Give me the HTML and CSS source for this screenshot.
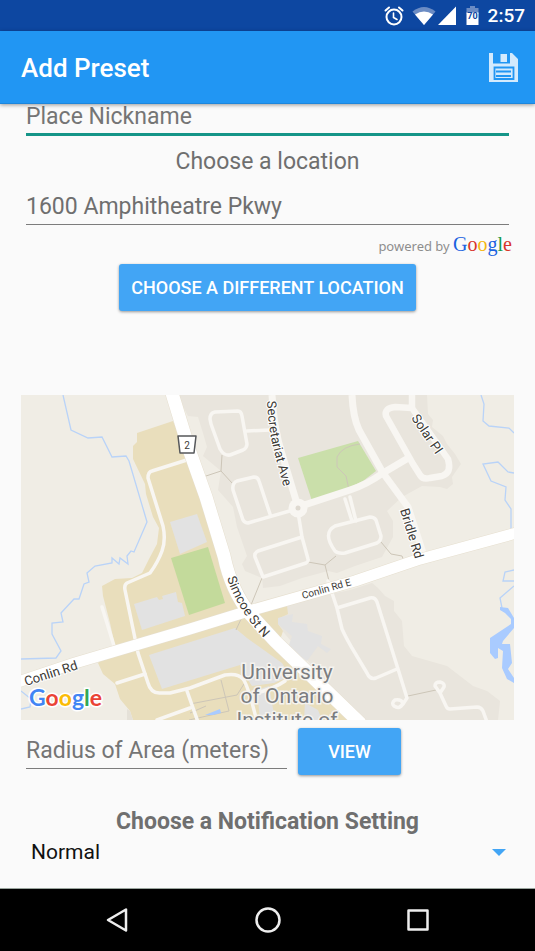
FILE: index.html
```html
<!DOCTYPE html>
<html lang="en">
<head>
<meta charset="utf-8">
<meta name="viewport" content="width=device-width, initial-scale=1">
<title>Add Preset</title>
<link rel="stylesheet" href="styles.css">
</head>
<body>
<div class="status-bar">
  <svg class="status-icon" width="20" height="20" viewBox="0 0 20 20" aria-hidden="true">
    <g fill="none" stroke="#fff" stroke-width="2" stroke-linecap="round">
      <circle cx="10" cy="11" r="7.5"/>
      <path d="M1.5 4.5 5 1.5M18.500 4.500 15 1.500"/>
      <path d="M9.500 7v4.500l3.500 2" stroke-width="1.600"/>
    </g>
  </svg>
  <svg class="status-icon wifi" width="24" height="20" viewBox="0 0 24 20" aria-hidden="true">
    <path d="M.500 5.500Q12-3.500 23.500 5.500L12 19z" fill="#6b8cc4"/>
    <path d="M3 8.500Q12 2.500 21 8.500L12 19z" fill="#fff"/>
  </svg>
  <svg class="status-icon signal" width="18" height="20" viewBox="0 0 18 20" aria-hidden="true">
    <path d="M18 .500V19H0z" fill="#fff"/>
  </svg>
  <svg class="status-icon battery" width="13" height="20" viewBox="0 0 13 20" aria-hidden="true">
    <path d="M4 0h5v2h3.500v6H.500V2H4z" fill="#6b8cc4"/>
    <path d="M.500 6.500h12V19H.500z" fill="#fff"/>
    <text x="6.500" y="13" text-anchor="middle" class="battery-level">70</text>
  </svg>
  <span class="clock">2:57</span>
</div>

<header class="app-bar">
  <h1 class="app-title">Add Preset</h1>
  <button class="save" type="button" aria-label="Save">
    <svg width="30" height="30" viewBox="0 0 30 30" aria-hidden="true">
      <path fill="#d3eafd" d="M0 0h4v10.500h17V0h2L29 6V29H0z"/>
      <path fill="#d3eafd" d="M11.500 1h6.500v8h-6.500z"/>
      <path fill="none" stroke="#2196f3" stroke-width="1.800" d="M5.500 14.500h19V26h-19zM7 18.500h15M7 23h15"/>
    </svg>
  </button>
</header>

<main class="form">
  <input class="field nickname" type="text" placeholder="Place Nickname" aria-label="Place Nickname">
  <label class="caption" for="address">Choose a location</label>
  <input class="field" id="address" type="text" value="1600 Amphitheatre Pkwy">
  <p class="attribution">powered by <span class="brand"><span class="g-blue">G</span><span class="g-red">o</span><span class="g-yellow">o</span><span class="g-blue">g</span><span class="g-green">l</span><span class="g-red">e</span></span></p>
  <button class="button choose" type="button">CHOOSE A DIFFERENT LOCATION</button>

  <svg class="map" viewBox="21 395 493 325" role="img" aria-label="Map">
    <defs>
      <path id="secretariat" d="M267 401Q268 425 273 447L287 500"/>
      <path id="simcoe" d="M227 578Q233 596 244 613T275 649"/>
    </defs>
    <path fill="#f0ede5" d="M21 395h493v325H21z"/>

    <!-- Residential blocks -->
    <g fill="#e9e5dd">
      <path d="M177 395 188 416 198 417 203 433 207 447 203 456 221 471 218 490 233 507 237 527 247 556 242 564 245 571 262 578 263 588 280 586 302 578 328 571 337 573 355 566 382 557 393 537 393 521 387 511 402 497 422 486 440 487 447 489 453 484 452 477 461 464 455 454 447 444 443 436 432 427 433 420 428 414 427 395z"/>
      <path d="M263 608 350 590 372 583 378 588 385 596 394 601 394 611 402 621 404 646 412 656 447 666 473 686 487 691 500 701 498 720H358z"/>
    </g>

    <!-- Campus grounds -->
    <g fill="#e9debc">
      <path d="M173 421 137 433 137 442 133 446 133 459 145 484 146 494 153 517 159 528 157 544 149 559 142 573 132 578 115 579 102 586 103 596 110 623 115 646 98 663 103 674 115 684 120 699 130 711 133 720H357L250 614 224 556 200 475 188 455z"/>
      <path d="M248 613 287 606 288 614 278 619 278 624 283 631 280 640 272 643z"/>
    </g>
    <path fill="#e5e1d8" d="M127 709 130 711 133 720H127z"/>

    <!-- Buildings -->
    <g fill="#e2e2e2">
      <path d="M170 522 197 514 207 542 180 554z"/>
      <path d="M134 604 157 597 159 600 163 599 162 596 176 592 178 602 182 603 185 616 142 630z"/>
      <path d="M149 655 235 628 247 638 282 663 290 676 274 683 252 686 246 677 240 665 162 689z"/>
      <path d="M278 618 285 616 293 614 292 622 300 623 307 624 308 631 322 636 321 644 331 649 327 653 318 646 307 661 288 648 292 636 278 624z"/>
      <path d="M257 690 269 686 275 720H260z"/>
      <path d="M305 703 318 710 322 720H304z"/>
    </g>

    <!-- Parks -->
    <path fill="#c3da9b" d="M171 558 208 547 225 603 189 615z"/>
    <path fill="#cadfaa" d="M298 458 358 441 376 471 363 481 350 487 312 501z"/>

    <!-- Footpaths -->
    <g fill="none" stroke="#cdc6b8" stroke-width="1">
      <path d="M203 477 221 471 222 455M221 471 232 483M360 444Q342 446 337 457V467L346 476 349 490"/>
      <path d="M262 578 251 605M308 562 325 565 336 556M325 565 329 581M381 542 391 554 402 556 404 561M408 696 436 690M242 617 236 630"/>
      <path d="M221 680 229 711 189 720M190 704 237 695 244 684M190 713 206 706"/>
    </g>

    <!-- Water -->
    <g fill="none" stroke="#b9d3f8" stroke-width="1.300">
      <path d="M63 395 71 430 88 438 102 437 112 457 126 456 129 461 147 522 134 552 131 551 127 556 128 564 120 558 119 564 112 558 112 563 95 566 87 573 89 582 84 584 79 599 74 599 61 613 63 622 52 623 52 634 61 651 56 658 21 659M21 691 31 699 30 707 21 709"/>
      <path d="M481 395 484 404 483 421 489 426 509 428 514 433M514 473 508 472 498 462 483 464 491 481 506 487 505 500 511 509V530M514 570 505 572 503 581H514M514 586 500 598 502 608"/>
    </g>
    <path fill="#a9cbff" d="M500 607 508 608 514 618V628L503 641 502 644H510L512 663 508 669 514 678V683L507 679 502 668 503 651 498 648V658L495 659 490 653V638L511 624V619L505 613 500 610zM205 715 220 709 221 713 213 715z"/>

    <!-- Minor streets -->
    <g fill="none" stroke="#f8f6f2" stroke-linecap="round" stroke-linejoin="round" stroke-width="3.500">
      <path d="M210 419Q210 413 215 412L238 411Q241 411 242 416L247 444Q247 448 243 450L230 455Q224 456 220 449L211 424zM247 431 270 430"/>
      <path d="M293 510 248 523Q245 523 243 520L233 490Q232 483 237 481L254 477Q258 477 259 481L270 514"/>
      <path d="M298 512 302 537 308 559Q309 561 306 563L263 577 255 557Q254 553 258 551L302 537"/>
      <path d="M345 499 352 521M350 497 356 521M335 526 370 517Q374 517 376 520L381 536Q381 541 377 543L345 553Q338 554 335 551 322 533 335 526z"/>
      <path d="M328 581 337 608 342 629Q347 640 355 653L367 673Q370 680 376 678L397 669M337 608 370 598Q375 597 377 602L398 669 407 698 403 704"/>
      <path d="M403 703Q401 699 395 700 391 703 394 706 400 710 403 703zM440 693 435 686Q435 682 440 682 445 683 444 687zM440 693 446 706Q447 709 450 709L477 707Q481 707 483 711L487 722"/>
      <path d="M190 459 152 471Q148 472 148 478L163 526Q166 540 162 551T150 573L127 583Q124 585 125 590L138 653 148 683Q151 694 161 693H170L190 688 225 675Q238 673 243 679T257 722"/>
      <path d="M102 607 115 649M117 683 145 674M187 691 198 722M157 720 190 708M257 693Q275 688 285 681"/>
    </g>

    <!-- Collector streets -->
    <g fill="none" stroke="#f8f6f2" stroke-linejoin="round" stroke-width="7">
      <path d="M272 395Q274 430 282 454L298 507 350 490Q366 485 383 473L410 457"/>
      <path d="M352 395Q353 417 359 430L383 473 408 507 424 556"/>
      <path stroke-width="6.500" d="M412 395V408L395 407Q384 408 386 416L413 464 420 475Q423 480 430 478L442 476Q452 473 448 459L412 408"/>
    </g>
    <circle cx="298" cy="508" r="9.500" fill="#f8f6f2"/>
    <circle cx="298" cy="508" r="2.500" fill="#ded9d0"/>

    <!-- Main roads -->
    <g fill="none" stroke-linejoin="round">
      <g stroke="#e6dfcf">
        <path stroke-width="14" d="M171 390 190 452 206 497 224 556Q231 590 250 614L275 641 361 724"/>
        <path stroke-width="12" d="M15 683 75 663 190 629 242 613 355 581 417 560 520 532"/>
      </g>
      <g stroke="#fff">
        <path stroke-width="13" d="M171 390 190 452 206 497 224 556Q231 590 250 614L275 641 361 724"/>
        <path stroke-width="11" d="M15 683 75 663 190 629 242 613 355 581 417 560 520 532"/>
      </g>
    </g>

    <path d="M178 436H196L194 453H180z" fill="#fff" stroke="#55575a" stroke-width="1.500" stroke-linejoin="round"/>
    <g class="road-label">
      <text x="187" y="449" text-anchor="middle" class="small">2</text>
      <text><textPath href="#secretariat">Secretariat Ave</textPath></text>
      <text><textPath href="#simcoe">Simcoe St N</textPath></text>
      <text transform="translate(411 418) rotate(56)">Solar Pl</text>
      <text transform="translate(400 510) rotate(73)">Bridle Rd</text>
      <text transform="translate(26 686) rotate(-18)">Conlin Rd</text>
      <text transform="translate(303 599) rotate(-16)" class="small">Conlin Rd E</text>
    </g>
    <g class="place-label">
      <text x="287" y="679">University</text>
      <text x="287" y="703">of Ontario</text>
      <text x="287" y="727">Institute of</text>
    </g>
    <text x="29" y="706" class="map-logo"><tspan fill="#4285f4">G</tspan><tspan fill="#ea4335">o</tspan><tspan fill="#fbbc05">o</tspan><tspan fill="#4285f4">g</tspan><tspan fill="#34a853">l</tspan><tspan fill="#ea4335">e</tspan></text>
  </svg>

  <div class="radius-row">
    <input class="field" type="text" placeholder="Radius of Area (meters)" aria-label="Radius of Area (meters)">
    <button class="button view" type="button">VIEW</button>
  </div>

  <label class="caption strong" for="notification">Choose a Notification Setting</label>
  <div class="spinner">
    <select id="notification"><option>Normal</option></select>
    <svg class="arrow" width="14" height="7" viewBox="0 0 14 7" aria-hidden="true"><path d="M0 0h14L7 7z" fill="#42a5f5"/></svg>
  </div>
</main>

<nav class="nav-bar">
  <button type="button" aria-label="Back"><svg width="26" height="26" viewBox="0 0 26 26"><path d="M21 2.500v21L3 13z"/></svg></button>
  <button type="button" aria-label="Home"><svg width="26" height="26" viewBox="0 0 26 26"><circle cx="13" cy="13" r="11.500"/></svg></button>
  <button type="button" aria-label="Recent apps"><svg width="26" height="26" viewBox="0 0 26 26"><path d="M3.500 3.500h19v19h-19z"/></svg></button>
</nav>
</body>
</html>
```
FILE: styles.css
```css
* {
  box-sizing: border-box;
}

body {
  margin: 0;
  min-height: 100vh;
  display: flex;
  flex-direction: column;
  background: #fafafa;
  color: #6f6f6f;
  font-family: Roboto, sans-serif;
  font-size: 23px;
}

button,
input,
select {
  font: inherit;
  color: inherit;
  margin: 0;
  padding: 0;
  border: 0;
  border-radius: 0;
  background: none;
}

.status-bar {
  display: flex;
  align-items: center;
  justify-content: flex-end;
  height: 31px;
  padding-right: 10px;
  background: #0d47a1;
  color: #fff;
}

.wifi {
  margin-left: 8px;
}

.signal {
  margin-left: 2px;
}

.battery {
  margin: 0 9px 0 10px;
}

.battery-level {
  font-size: 9px;
  font-weight: 700;
  fill: #0d47a1;
}

.clock {
  font-size: 19px;
  font-weight: 500;
}

.app-bar {
  position: relative;
  display: flex;
  align-items: center;
  justify-content: space-between;
  height: 73px;
  padding: 2px 16px 0 21px;
  background: #2196f3;
  border-bottom: 1px solid #1c86dc;
  box-shadow: 0 1px 4px rgba(0, 0, 0, 0.4);
}

.app-title {
  margin: 0;
  color: #fff;
  font-size: 26px;
  font-weight: 500;
}

.save svg {
  display: block;
}

.form {
  flex: 1;
  display: flex;
  flex-direction: column;
  padding: 0 21px;
}

.field {
  height: 36px;
  min-width: 0;
  margin: 0 5px;
  border-bottom: 1px solid #7c7c7c;
  outline: none;
}

.field::placeholder {
  color: #757575;
  opacity: 1;
}

.nickname {
  height: 32px;
  padding-bottom: 4px;
  border-bottom: 3px solid #159588;
}

.caption {
  margin-top: 12px;
  line-height: 28px;
  text-align: center;
}

.caption + .field {
  margin-top: 13px;
}

.attribution {
  margin: 5px 2px 0;
  line-height: 28px;
  text-align: right;
  color: #8e8e8e;
  font-family: "Noto Sans", sans-serif;
  font-size: 13px;
}

.brand {
  font-family: "Liberation Serif", serif;
  font-size: 20px;
}

.g-blue { color: #1b62e0; }
.g-red { color: #d8352b; }
.g-yellow { color: #f5b50f; }
.g-green { color: #149a4c; }

.button {
  height: 47px;
  border-radius: 3px;
  background: #42a5f5;
  color: #fff;
  font-size: 18px;
  font-weight: 500;
  box-shadow: 0 1px 3px rgba(0, 0, 0, 0.4);
}

.choose {
  align-self: center;
  margin-top: 4px;
  padding: 0 12px;
}

.map {
  display: block;
  width: 100%;
  margin-top: 84px;
}

.road-label {
  font-size: 13px;
  fill: #3c3a36;
  stroke: #fff;
  stroke-width: 2px;
  paint-order: stroke;
}

.road-label .small {
  font-size: 10px;
}

.place-label {
  font-size: 21px;
  text-anchor: middle;
  fill: #7b7d80;
  stroke: #f5f3ef;
  stroke-width: 3px;
  paint-order: stroke;
}

.map-logo {
  font-family: Lato, sans-serif;
  font-size: 23px;
  font-weight: 700;
  stroke: #fff;
  stroke-width: 3px;
  paint-order: stroke;
}

.radius-row {
  display: flex;
  align-items: flex-start;
  margin-top: 8px;
}

.radius-row .field {
  flex: 0 1 261px;
  height: 41px;
  margin-right: 11px;
  padding-top: 4px;
}

.view {
  width: 103px;
}

.strong {
  margin-top: 33px;
  font-weight: 700;
}

.spinner {
  display: flex;
  align-items: center;
  height: 32px;
  padding: 0 8px 0 10px;
}

.spinner select {
  flex: 1;
  appearance: none;
  color: #111;
  font-size: 21px;
  outline: none;
}

.nav-bar {
  display: flex;
  justify-content: center;
  height: 63px;
  border-top: 1px solid #9aa59e;
  background: #000;
}

.nav-bar button {
  display: grid;
  place-items: center;
  width: 150px;
}

.nav-bar svg {
  fill: none;
  stroke: #eee;
  stroke-width: 2.5px;
  stroke-linejoin: round;
}
```
